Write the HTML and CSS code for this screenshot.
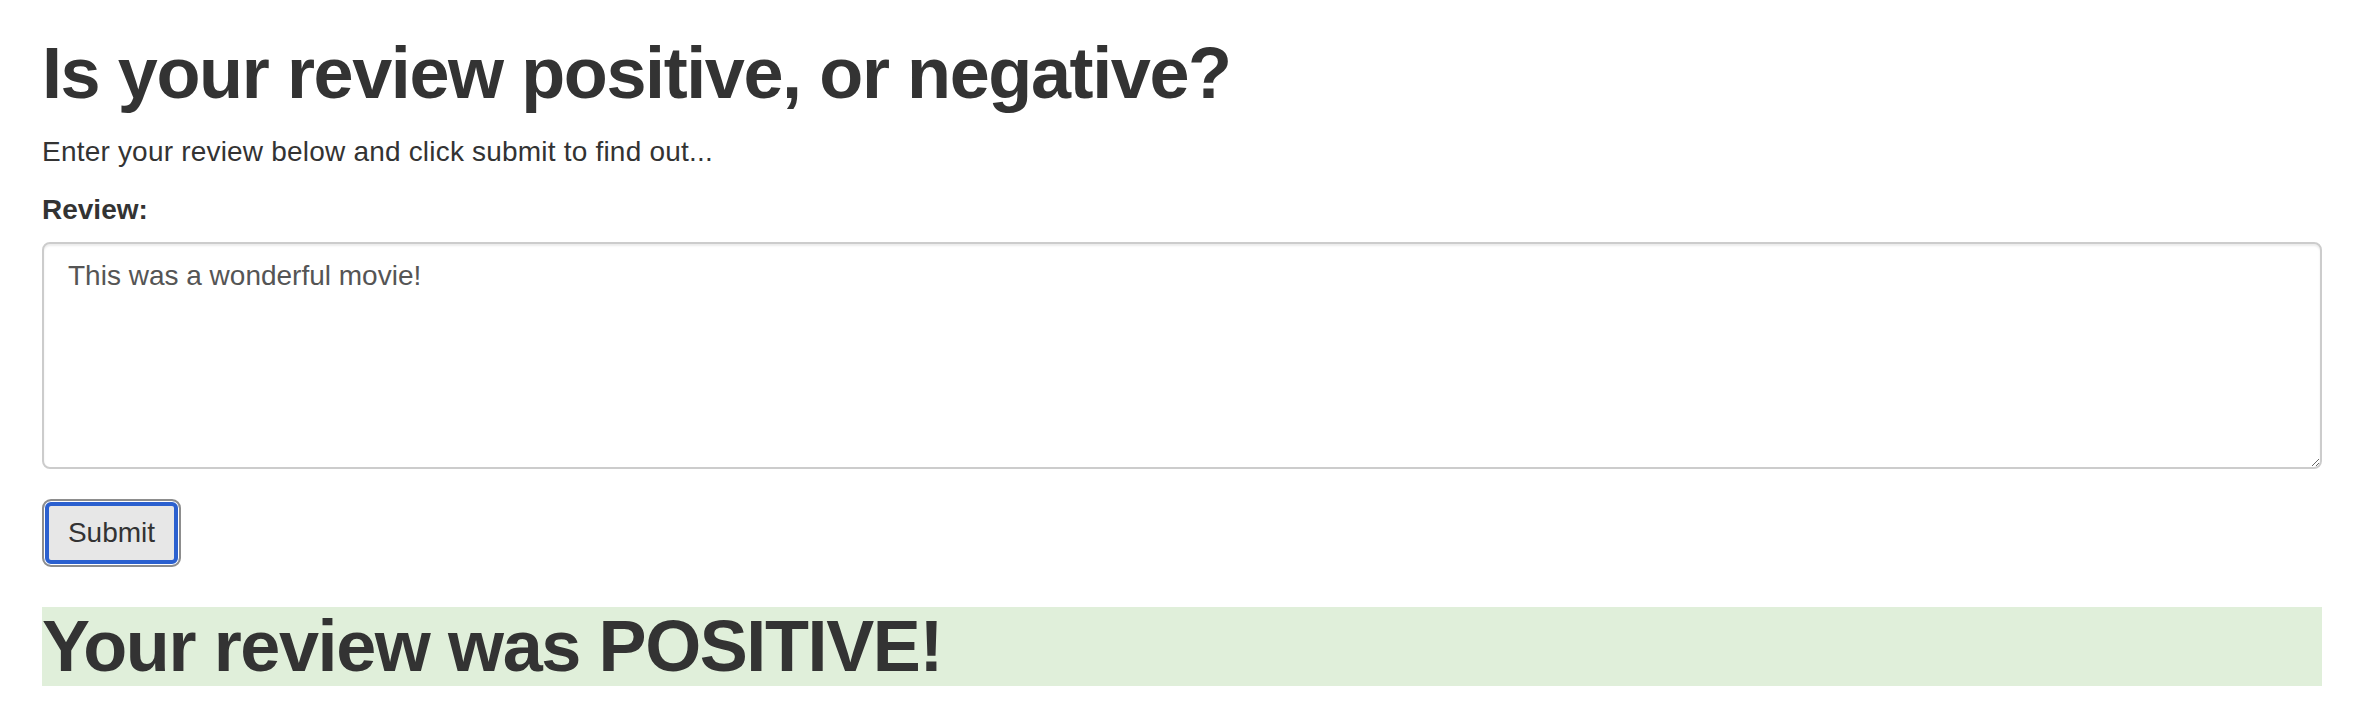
FILE: index.html
```html
<!DOCTYPE html>
<html>
<head>
<meta charset="utf-8">
<title>Review sentiment</title>
<link rel="stylesheet" href="styles.css">
</head>
<body>
<div class="container">
  <h1 class="title">Is your review positive, or negative?</h1>
  <p class="intro">Enter your review below and click submit to find out...</p>
  <form class="review-form">
    <label class="field-label" for="review">Review:</label>
    <textarea class="review-input" id="review">This was a wonderful movie!</textarea>
    <button type="button" class="submit-btn">Submit</button>
  </form>
  <h1 class="result">Your review was POSITIVE!</h1>
</div>
</body>
</html>
```
FILE: styles.css
```css
html, body {
  margin: 0;
  padding: 0;
  background: #fff;
}
body {
  font-family: "Liberation Sans", Arial, Helvetica, sans-serif;
  color: #333;
}
.container {
  padding: 0 58px 0 42px;
}
.title {
  margin: 34px 0 0 0;
  font-size: 72px;
  line-height: 79px;
  font-weight: 700;
  letter-spacing: -1.4px;
  color: #333;
}
.intro {
  margin: 19px 0 0 0;
  font-size: 28px;
  line-height: 40px;
  letter-spacing: 0.2px;
}
.review-form {
  display: flex;
  flex-direction: column;
  align-items: flex-start;
}
.field-label {
  display: block;
  margin-top: 18px;
  font-size: 28px;
  line-height: 40px;
  font-weight: 700;
}
.review-input {
  display: block;
  box-sizing: border-box;
  width: 100%;
  height: 227px;
  margin: 12px 0 0 0;
  padding: 12px 24px;
  border: 2px solid #cccccc;
  border-radius: 8px;
  box-shadow: inset 0 2px 2px rgba(0,0,0,0.075);
  font-family: "Liberation Sans", Arial, Helvetica, sans-serif;
  font-size: 28px;
  line-height: 40px;
  color: #555;
  resize: vertical;
  outline: none;
}
.submit-btn {
  box-sizing: border-box;
  width: 139px;
  height: 68px;
  margin-top: 30px;
  padding: 0;
  border: 2px solid #8d8d8d;
  border-radius: 9px;
  background: #e7e7e7;
  box-shadow: inset 0 0 0 1px #ffffff, inset 0 0 0 5px #2b60cf;
  font-family: "Liberation Sans", Arial, Helvetica, sans-serif;
  font-size: 28px;
  color: #333;
  cursor: pointer;
}
.result {
  margin: 40px 0 0 0;
  font-size: 72px;
  line-height: 79px;
  font-weight: 700;
  letter-spacing: -1.4px;
  background: #e0efda;
  color: #333;
}
```
